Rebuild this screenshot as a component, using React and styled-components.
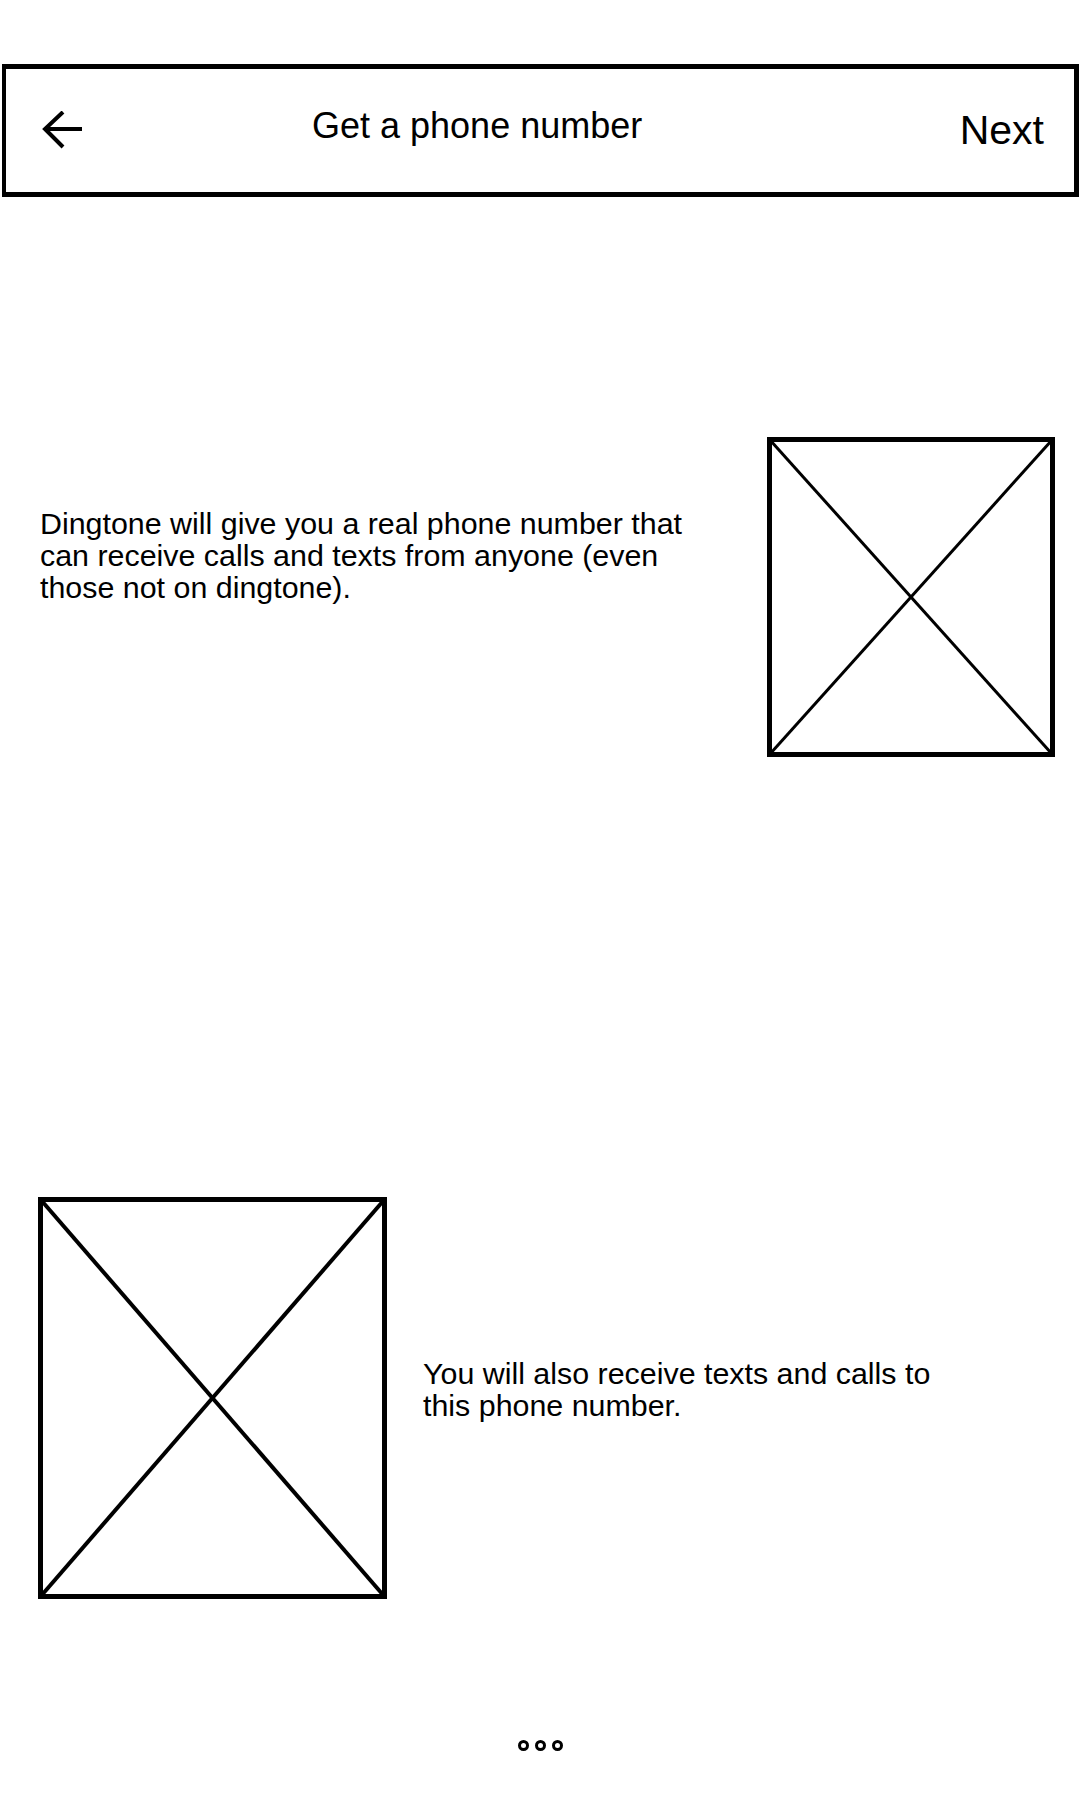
import React from 'react'
import styled, { createGlobalStyle } from 'styled-components'

const GlobalStyle = createGlobalStyle`
  html, body {
    margin: 0;
    padding: 0;
    background: #fff;
  }
  body {
    font-family: "Liberation Sans", Arial, sans-serif;
    color: #000;
  }
`

const Page = styled.div`
  width: 1080px;
  min-height: 1800px;
  padding-top: 64px;
  box-sizing: border-box;
  display: flex;
  flex-direction: column;
`

const Header = styled.header`
  margin: 0 1px 0 2px;
  height: 133px;
  box-sizing: border-box;
  border: 5px solid #000;
  border-left-width: 4px;
  display: flex;
  align-items: center;
  padding: 0 30px 0 36px;
`

const BackButton = styled.button`
  border: none;
  background: none;
  padding: 0;
  display: flex;
  width: 42px;
  height: 40px;
  cursor: pointer;
`

const Title = styled.h1`
  margin: 0 0 10px 228px;
  font-size: 36px;
  font-weight: 400;
`

const NextButton = styled.button`
  margin-left: auto;
  border: none;
  background: none;
  padding: 0;
  font-family: inherit;
  font-size: 41px;
  color: #000;
  cursor: pointer;
`

const Feature = styled.section`
  display: flex;
  align-items: flex-start;
  margin-top: ${(p) => p.$top}px;
  padding: ${(p) => (p.$reverse ? '0 0 0 38px' : '0 25px 0 40px')};
  justify-content: ${(p) => (p.$reverse ? 'flex-start' : 'space-between')};
`

const Text = styled.p`
  margin: ${(p) => p.$offset}px 0 0 ${(p) => p.$gap || 0}px;
  max-width: ${(p) => p.$width}px;
  font-size: 30.4px;
  line-height: 32px;
`

const Placeholder = styled.svg`
  display: block;
  flex-shrink: 0;
`

const Dots = styled.div`
  margin-top: 141px;
  display: flex;
  justify-content: center;
  gap: 6px;
`

const Dot = styled.span`
  width: 11px;
  height: 11px;
  box-sizing: border-box;
  border: 3px solid #000;
  border-radius: 50%;
`

const ImageBox = ({ width, height, stroke }) => (
  <Placeholder width={width} height={height} viewBox={`0 0 ${width} ${height}`}>
    <rect x="2.5" y="2.5" width={width - 5} height={height - 5} fill="#fff" stroke="#000" strokeWidth="5" />
    <line x1="3" y1="3" x2={width - 3} y2={height - 3} stroke="#000" strokeWidth={stroke} />
    <line x1={width - 3} y1="3" x2="3" y2={height - 3} stroke="#000" strokeWidth={stroke} />
  </Placeholder>
)

const App = () => {
  return (
    <>
      <GlobalStyle />
      <Page>
        <Header>
          <BackButton aria-label="back">
            <svg width="42" height="40" viewBox="0 0 42 40" fill="none" stroke="#000" strokeWidth="4" strokeLinecap="butt">
              <line x1="3" y1="18" x2="40" y2="18" />
              <polyline points="21,1 3,18 21,36" />
            </svg>
          </BackButton>
          <Title>Get a phone number</Title>
          <NextButton>Next</NextButton>
        </Header>

        <Feature $top={240}>
          <Text $offset={70} $width={680}>
            Dingtone will give you a real phone number that can receive calls and texts from anyone (even those not on dingtone).
          </Text>
          <ImageBox width={288} height={320} stroke={3} />
        </Feature>

        <Feature $top={440} $reverse>
          <ImageBox width={349} height={402} stroke={4} />
          <Text $offset={160} $width={540} $gap={36}>
            You will also receive texts and calls to this phone number.
          </Text>
        </Feature>

        <Dots>
          <Dot />
          <Dot />
          <Dot />
        </Dots>
      </Page>
    </>
  )
}

export default App
